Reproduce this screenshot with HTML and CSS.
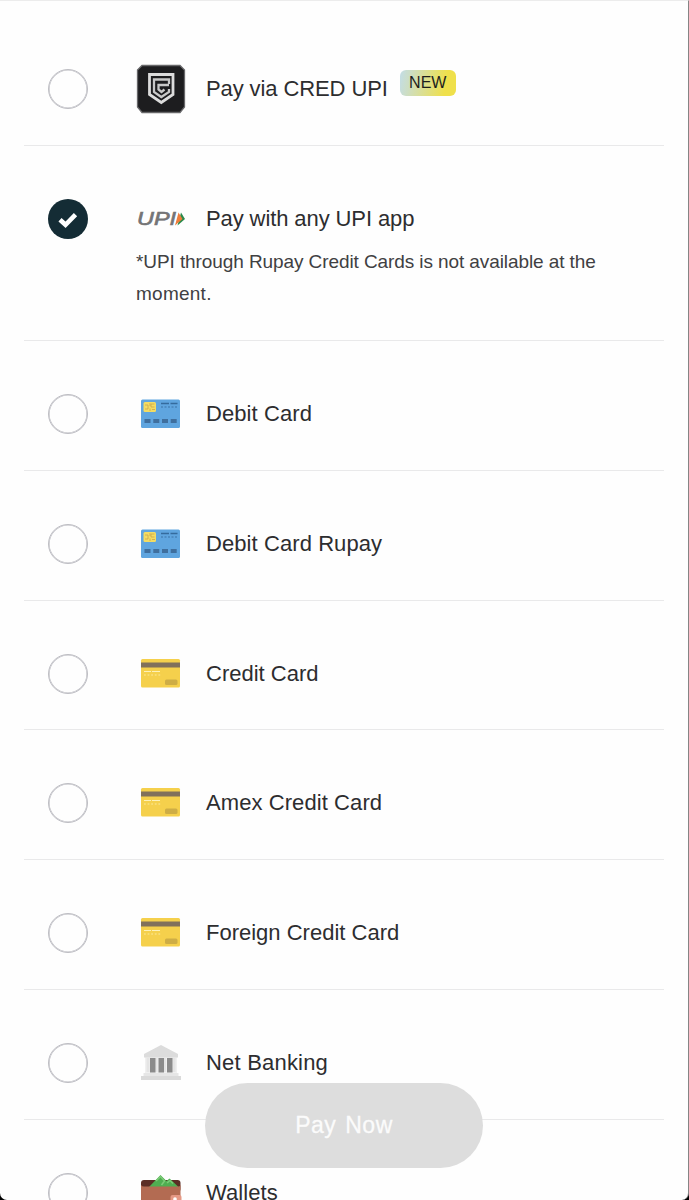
FILE: index.html
```html
<!DOCTYPE html>
<html lang="en">
<head>
<meta charset="utf-8">
<title>Payment options</title>
<link rel="stylesheet" href="styles.css">
</head>
<body>
<svg class="defs" width="0" height="0" aria-hidden="true">
  <symbol id="debit" viewBox="0 0 50 50">
    <rect x="5" y="10.500" width="39" height="28.500" rx="1.500" fill="#5fa5df"/>
    <rect x="7.500" y="13" width="12.500" height="10" rx="1.500" fill="#f3dc62"/>
    <path d="M9 16h3v4H9M18.500 15H15v3h3.500M14 14v3M14 19.500v2.500M16 20.500h3" fill="none" stroke="#c9a44b" stroke-width=".8"/>
    <path d="M25 14.500h8M34.500 14.500h7" stroke="#356b9d" stroke-width="1.300"/>
    <path d="M25 18h17" stroke="#3c75a8" stroke-width="1.200" stroke-dasharray="2 1.500"/>
    <path d="M8.500 32h6M17.300 32h6M26 32h6M34.700 32h6" stroke="#3f6f9e" stroke-width="4"/>
  </symbol>
  <symbol id="credit" viewBox="0 0 50 50">
    <rect x="5" y="10" width="39" height="28.500" rx="1.500" fill="#f5d04c"/>
    <path d="M5 16h39" stroke="#81705b" stroke-width="5"/>
    <path d="M8 22.500h7M16 22.500h8" stroke="#fdf1b8" stroke-width="1.200"/>
    <path d="M8 26h17" stroke="#fbe998" stroke-width="1.200" stroke-dasharray="1.800 1.800"/>
    <rect x="29" y="30.500" width="12.500" height="5.500" rx="1.500" fill="#cead45"/>
  </symbol>
</svg>
<main class="sheet">
  <ul class="options">
    <li class="option">
      <span class="radio"></span>
      <svg class="icon" viewBox="0 0 50 50">
        <path d="M6 1.500h38l4.500 4.500v37L44 48.500H6L1.500 43V6z" fill="#1d1d1f" stroke="#68686a" stroke-width="1.300"/>
        <path d="M13.500 10.500h23.500v20L25.300 38.500 13.500 30.500z" fill="none" stroke="#dcdcdc" stroke-width="2.800"/>
        <path d="M33 20v-4.500H18V28l7.300 5 7.700-5v-3M33 21H22.500v4.500l3 2.500 3-2.500" fill="none" stroke="#c8c8c8" stroke-width="2.300"/>
      </svg>
      <span class="label l-cred">Pay via CRED UPI</span>
      <span class="badge">NEW</span>
    </li>
    <li class="option selected">
      <span class="radio checked"><svg viewBox="0 0 40 40"><path d="M12 20.800l5.500 5L27.500 15.700" fill="none" stroke="#fff" stroke-width="4.600"/></svg></span>
      <svg class="icon" viewBox="0 0 50 50">
        <path d="M45 18.500l4 6.500-7.500 6.500z" fill="#2b8a4b"/>
        <path d="M42.500 18.500l4 6.500-7.500 6.500z" fill="#ee7d3b"/>
        <text class="upi" x="1" y="31" textLength="39" lengthAdjust="spacingAndGlyphs">UPI</text>
      </svg>
      <span class="label l-upi">Pay with any UPI app</span>
      <p class="note"><span class="n1">*UPI through Rupay Credit Cards is not available at the</span><br><span class="n2">moment.</span></p>
    </li>
    <li class="option"><span class="radio"></span><svg class="icon"><use href="#debit"/></svg><span class="label l-debit">Debit Card</span></li>
    <li class="option"><span class="radio"></span><svg class="icon"><use href="#debit"/></svg><span class="label l-debit">Debit Card Rupay</span></li>
    <li class="option"><span class="radio"></span><svg class="icon"><use href="#credit"/></svg><span class="label">Credit Card</span></li>
    <li class="option"><span class="radio"></span><svg class="icon"><use href="#credit"/></svg><span class="label l-debit">Amex Credit Card</span></li>
    <li class="option"><span class="radio"></span><svg class="icon"><use href="#credit"/></svg><span class="label">Foreign Credit Card</span></li>
    <li class="option">
      <span class="radio"></span>
      <svg class="icon" viewBox="0 0 50 50">
        <path d="M9 17h32v21H9z" fill="#f0f0f0"/>
        <path d="M25 7l17 9v3.500H8V16z" fill="#dcdcdc"/>
        <path d="M10.500 20h3v14h-3zM19.500 20h2v14h-2zM28 20h2v14h-2zM36.500 20h3v14h-3z" fill="#e4e4e4"/>
        <path d="M14 20h5.500v14.500H14zM22.500 20H28v14.500h-5.500zM31 20h5.500v14.500H31z" fill="#8b8b8b"/>
        <path d="M7.500 35h35v3h-35z" fill="#e6e6e6"/><path d="M5 38h40v4H5z" fill="#dadada"/>
      </svg>
      <span class="label l-net">Net Banking</span>
    </li>
    <li class="option">
      <span class="radio"></span>
      <svg class="icon" viewBox="0 0 50 50">
        <rect x="5" y="12" width="39.500" height="12" rx="3" fill="#5b2e25"/>
        <path d="M13 19L24.500 7l6 6 3-2.500 9 8.500z" fill="#4fae51"/>
        <path d="M20 13l4.500-4.500 4 4.500-3 4M31 15l3-2.500 3 3" fill="none" stroke="#7dcb78" stroke-width="1.500"/>
        <path d="M5 17q1 1.500 3 1.500h34q2 0 2.500-1.500v28H5z" fill="#b36b52"/>
        <rect x="34.500" y="27" width="11" height="11" rx="2" fill="#e59884"/><circle cx="39" cy="31" r="1.800" fill="#fff"/>
      </svg>
      <span class="label l-debit">Wallets</span>
    </li>
  </ul>
  <button class="pay"><span>Pay Now</span></button>
</main>
</body>
</html>
```
FILE: styles.css
```css
* { box-sizing: border-box; }
html { background: #000; }
body { margin: 0; height: 1200px; overflow: hidden; font-family: "Liberation Sans", Arial, sans-serif; color: #2d2d2f; }
.defs { display: block; position: absolute; }
.sheet {
  position: relative;
  height: 1200px;
  overflow: hidden;
  padding: 15px 24px 0;
  background: #fefefe;
  border-top: 1px solid #ececec;
  border-right: 1px solid #858585;
  border-radius: 0 0 7px 7px;
}
.options { list-style: none; margin: 0; padding: 0; }
.option {
  display: grid;
  grid-template-columns: 40px 50px auto auto;
  justify-content: start;
  align-items: center;
  height: 129.800px;
  width: 640px;
  padding: 48px 24px 0;
  align-content: start;
  border-bottom: 1px solid #e9e9ea;
}
.option.selected { height: 195.200px; }
.radio { width: 40px; height: 40px; border: 1px solid #bdbdc3; border-radius: 50%; margin: 5px 0; box-shadow: inset 0 0 0 .6px #bdbdc3; }
.radio.checked { border: 0; background: #142c35; box-shadow: none; }
.radio svg { display: block; width: 40px; height: 40px; }
.icon { width: 50px; height: 50px; margin-left: 48px; }
.label { margin-left: 68px; font-size: 22px; line-height: 30px; white-space: nowrap; }
.l-cred, .l-upi { letter-spacing: -.1px; }
.l-debit { letter-spacing: .08px; }
.l-net { letter-spacing: .2px; }
.badge {
  width: 56px; height: 26px; margin: 0 0 13px 12px;
  border-radius: 6px;
  background: linear-gradient(100deg, #c3dde7, #efe04b 80%);
  color: #1d1d1d; font-size: 16px; line-height: 26px; text-align: center;
}
.note { grid-column: 1 / -1; margin: 2px 0 0 88px; font-size: 19px; line-height: 32px; color: #404042; white-space: nowrap; }
.n1 { letter-spacing: -.09px; }
.n2 { letter-spacing: .25px; }
.upi { font-size: 17.500px; font-style: italic; fill: #747476; stroke: #747476; stroke-width: .6px; }
.pay {
  position: absolute; left: 205px; top: 1082px;
  width: 278px; height: 85px;
  border: 0; border-radius: 43px;
  background: #ddd; color: #fbfbfb;
  font: 23px "Liberation Sans", Arial, sans-serif;
  letter-spacing: .5px; word-spacing: 2px;
  -webkit-text-stroke: .3px #fbfbfb;
}
```
